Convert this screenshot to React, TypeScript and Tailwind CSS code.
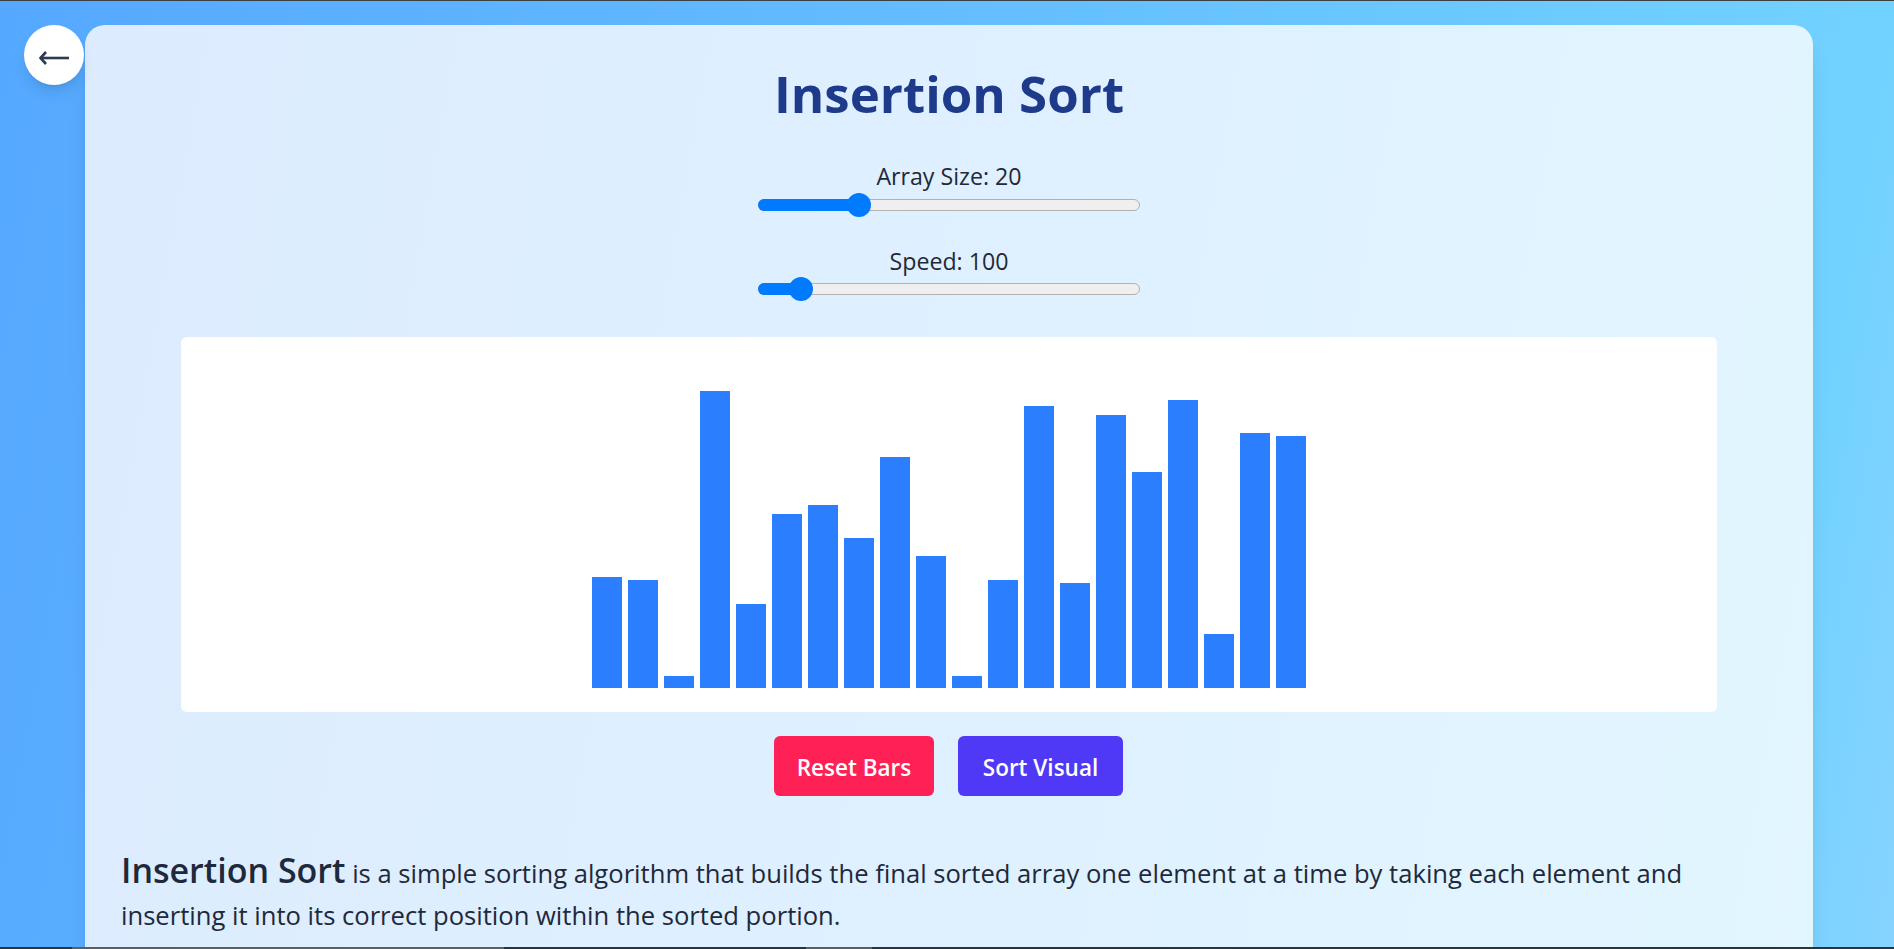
const heights = [37, 36, 4, 99, 28, 58, 61, 50, 77, 44, 4, 36, 94, 35, 91, 72, 96, 18, 85, 84];

const RangeRow: React.FC<{ label: string; thumb: number; className?: string; gapClass: string }> = ({ label, thumb, className, gapClass }) => (
  <div className={`flex flex-col items-center ${className ?? ''}`}>
    <label className="text-[23.2px] leading-[28px] font-medium text-[#1f2937]">{label}</label>
    <div className={`relative h-[12px] w-[382px] rounded-full border border-[#b2b2b2] bg-[#efefef] ${gapClass}`}>
      <div className="absolute -top-px -left-px h-[12px] rounded-full bg-[#007aff]" style={{ width: thumb }} />
      <div
        className="absolute -top-[7px] size-[24px] -translate-x-1/2 rounded-full bg-[#007aff]"
        style={{ left: thumb - 1 }}
      />
    </div>
  </div>
);

export default function App() {
  return (
    <div className="relative flex h-[949px] flex-col overflow-hidden bg-[linear-gradient(100deg,#55a8ff_0%,#72d2ff_92%,#87d3ff_100%)] font-['Open_Sans','Noto_Sans',sans-serif]">
      <div className="h-px shrink-0 bg-[#3c4043]" />
      <button
        type="button"
        aria-label="Back"
        className="absolute top-[25px] left-[24px] z-10 flex size-[60px] items-center justify-center rounded-full bg-white pt-[6px] shadow-lg"
      >
        <svg width="30" height="20" viewBox="0 0 30 20" fill="none" stroke="#2d3a52" strokeWidth="2.6">
          <path d="M1 10h29" />
          <path d="M7 4 1.500 10 7 16" />
        </svg>
      </button>

      <main className="mt-[24px] ml-[85px] flex min-h-0 w-[1728px] flex-1 flex-col items-center overflow-hidden rounded-t-[20px] bg-[linear-gradient(100deg,#dcecfe_0%,#deefff_40%,#e2f6ff_100%)] px-[36px] shadow-xl">
        <h1 className="mt-[33px] text-[51px] leading-[70px] font-bold text-[#1e3a8a]">Insertion Sort</h1>

        <RangeRow label="Array Size: 20" thumb={101} className="mt-[34px]" gapClass="mt-[9px]" />
        <RangeRow label="Speed: 100" thumb={43} className="mt-[36px]" gapClass="mt-[8px]" />

        <section className="mt-[42px] flex h-[375px] w-[1536px] shrink-0 items-end justify-center gap-[6px] rounded-md bg-white pb-[24px]">
          {heights.map((value, i) => (
            <div key={i} className="w-[30px] bg-[#2b7fff]" style={{ height: value * 3 }} />
          ))}
        </section>

        <div className="mt-[24px] flex gap-[24px] pr-[1px]">
          <button type="button" className="h-[60px] w-[160px] rounded-md bg-[#ff2056] pt-[4px] text-[22.5px] font-semibold text-white">
            Reset Bars
          </button>
          <button type="button" className="h-[60px] w-[165px] rounded-md bg-[#4f39f6] pt-[4px] text-[22.5px] font-semibold text-white">
            Sort Visual
          </button>
        </div>

        <p className="mt-[53px] w-full text-[25.6px] leading-[42px] text-[#1e293b]">
          <strong className="text-[34px] font-semibold">Insertion Sort</strong> is a simple sorting algorithm that builds the final sorted array one element at a time by taking each element and inserting it into its correct position within the sorted portion.
        </p>
      </main>
      <div className="flex h-[2px] shrink-0 bg-[#2a343a]">
        <div className="ml-[72px] w-[432px] bg-[#5a5f63]" />
        <div className="ml-[302px] w-[66px] bg-[#5a5f63]" />
      </div>
    </div>
  );
}
